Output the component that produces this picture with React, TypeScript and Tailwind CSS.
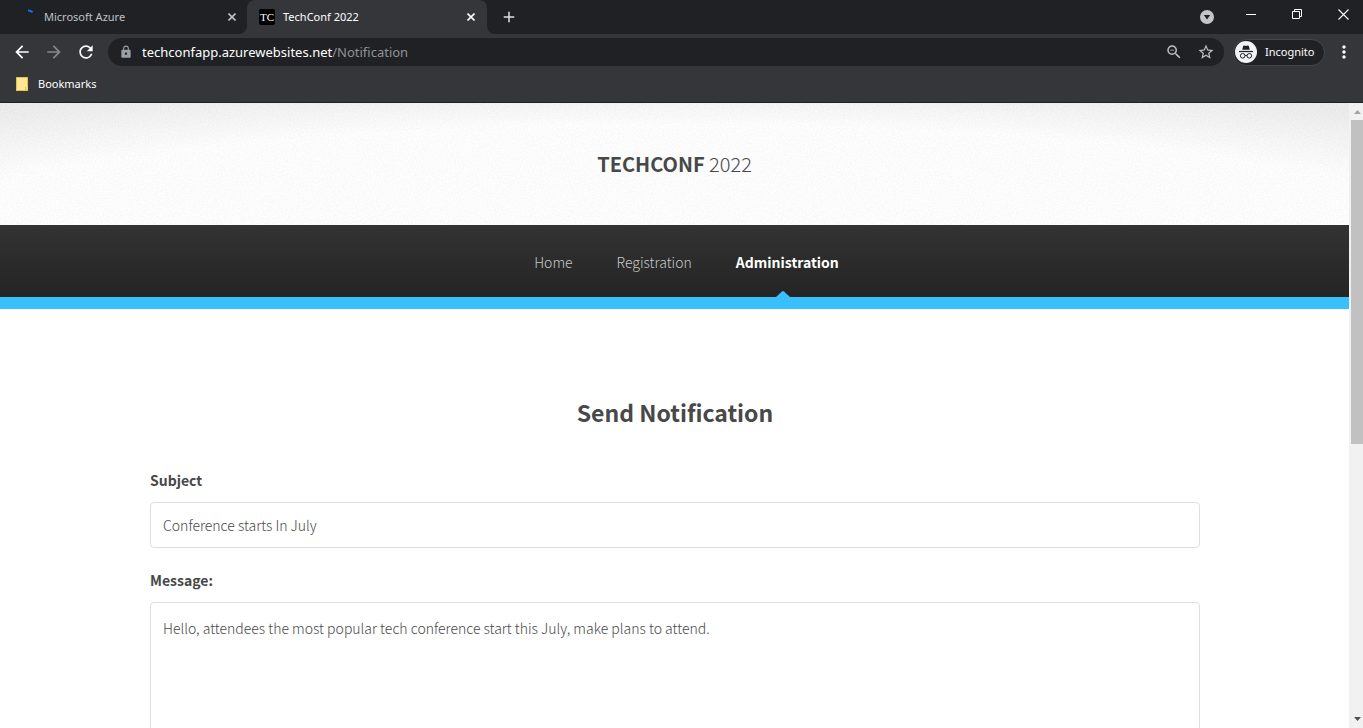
import type { ReactNode } from "react";
import {
  MdAdd,
  MdArrowBack,
  MdArrowForward,
  MdLock,
  MdMoreVert,
  MdRefresh,
  MdStarBorder,
  MdZoomOut,
} from "react-icons/md";

function IconButton({ label, className, children }: { label: string; className: string; children: ReactNode }) {
  return (
    <button type="button" aria-label={label} className={`flex shrink-0 items-center justify-center ${className}`}>
      {children}
    </button>
  );
}

function CloseTabButton() {
  return (
    <IconButton label="Close tab" className="size-4">
      <svg className="size-2" viewBox="0 0 8 8" stroke="currentColor" strokeWidth="1.6" aria-hidden="true">
        <path d="M0.5 0.5 L7.5 7.5 M7.5 0.5 L0.5 7.5" />
      </svg>
    </IconButton>
  );
}

function TabStrip() {
  return (
    <div className="flex h-[34px] shrink-0 bg-[#202124] text-[11px] leading-4">
      <div className="flex w-[247px] items-center pr-[7px] pl-5 text-[#bdc1c6]">
        <svg className="size-4 shrink-0" viewBox="0 0 16 16" fill="none" aria-hidden="true">
          <path d="M8 1.5 A7 7 0 0 1 12.6 3.2" stroke="#1a73e8" strokeWidth="2" />
        </svg>
        <span className="grow pl-2">Microsoft Azure</span>
        <CloseTabButton />
      </div>
      <div className="relative flex w-[240px] items-center rounded-t-lg bg-[#35363a] pr-2 pl-3 text-white">
        <svg className="absolute bottom-0 -left-2 size-2" viewBox="0 0 8 8" aria-hidden="true">
          <path d="M8 0 A8 8 0 0 1 0 8 H8 Z" fill="#35363a" />
        </svg>
        <svg className="absolute -right-2 bottom-0 size-2" viewBox="0 0 8 8" aria-hidden="true">
          <path d="M0 0 A8 8 0 0 0 8 8 H0 Z" fill="#35363a" />
        </svg>
        <span className="flex size-4 shrink-0 items-center justify-center rounded-xs bg-black font-['Liberation_Serif',serif] text-white">
          TC
        </span>
        <span className="grow pl-2">TechConf 2022</span>
        <CloseTabButton />
      </div>
      <IconButton label="New tab" className="ml-2 w-7 text-[#dee1e6]">
        <MdAdd className="size-[18px]" />
      </IconButton>
      <div className="ml-auto flex">
        <IconButton label="Search tabs" className="w-7">
          <svg className="size-[14px]" viewBox="0 0 14 14" aria-hidden="true">
            <circle cx="7" cy="7" r="7" fill="#c3c5ca" />
            <path d="M3.8 5 H10.2 L7 9.4 Z" fill="#202124" />
          </svg>
        </IconButton>
        <IconButton label="Minimize" className="ml-[7px] h-7 w-[46px]">
          <svg className="size-[10px]" viewBox="0 0 10 10" aria-hidden="true">
            <path d="M0 5.5 H10" stroke="#fff" />
          </svg>
        </IconButton>
        <IconButton label="Restore" className="h-7 w-[46px]">
          <svg className="size-[10px]" viewBox="0 0 10 10" fill="none" stroke="#fff" aria-hidden="true">
            <path d="M0.5 2.5 H7.5 V9.5 H0.5 Z M2.5 2.5 V0.5 H9.5 V7.5 H7.5" />
          </svg>
        </IconButton>
        <IconButton label="Close window" className="h-7 w-[43px] pl-[3px]">
          <svg className="size-[11px]" viewBox="0 0 11 11" stroke="#fff" strokeWidth="1.1" aria-hidden="true">
            <path d="M0.5 0.5 L10.5 10.5 M10.5 0.5 L0.5 10.5" />
          </svg>
        </IconButton>
      </div>
    </div>
  );
}

function IncognitoIcon() {
  return (
    <svg className="size-[22px] shrink-0" viewBox="0 0 22 22" fill="none" aria-hidden="true">
      <circle cx="11" cy="11" r="11" fill="#f1f3f4" />
      <path d="M7.2 8.8 L8.2 5.1 Q8.5 4.2 9.4 4.5 L11 5 L12.6 4.5 Q13.5 4.2 13.8 5.1 L14.8 8.8 Z" fill="#202124" />
      <path d="M4 10.5 H18" stroke="#202124" strokeWidth="1.2" />
      <circle cx="7.7" cy="14.8" r="2.3" stroke="#202124" />
      <circle cx="14.3" cy="14.8" r="2.3" stroke="#202124" />
      <path d="M10 14.6 Q11 13.9 12 14.6" stroke="#202124" />
    </svg>
  );
}

function Toolbar() {
  return (
    <div className="flex h-9 shrink-0 items-center bg-[#35363a] pl-[6px] text-white">
      <IconButton label="Back" className="size-8">
        <MdArrowBack className="size-5" />
      </IconButton>
      <IconButton label="Forward" className="size-8 text-[#87888b]">
        <MdArrowForward className="size-5" />
      </IconButton>
      <IconButton label="Reload" className="size-8">
        <MdRefresh className="size-5" />
      </IconButton>
      <div className="ml-[6px] flex h-7 grow items-center rounded-full bg-[#202124] pr-[9px] pl-[11px]">
        <MdLock className="size-[14px] shrink-0 text-[#9aa0a6]" />
        <a href="#notification" className="grow pt-px pl-[9px] text-[13px] text-white">
          techconfapp.azurewebsites.net<span className="text-[#8f9195]">/Notification</span>
        </a>
        <IconButton label="Zoom" className="size-8 text-[#bdc1c6]">
          <MdZoomOut className="size-[18px]" />
        </IconButton>
        <IconButton label="Bookmark this page" className="ml-[7px] w-[18px] text-[#bdc1c6]">
          <MdStarBorder className="size-[18px]" />
        </IconButton>
      </div>
      <button
        type="button"
        className="ml-[9px] flex h-[27px] w-[92px] items-center rounded-full border border-[#45464a] bg-[#202124] pl-[1px] text-[11px]"
      >
        <IncognitoIcon />
        <span className="pl-2">Incognito</span>
      </button>
      <IconButton label="Menu" className="mr-[9px] ml-[9px] w-5">
        <MdMoreVert className="size-5" />
      </IconButton>
    </div>
  );
}

function BookmarksBar() {
  return (
    <div className="flex h-[33px] shrink-0 items-center border-b border-[#202124] bg-[#35363a] pb-1 pl-4 text-[11px] text-white">
      <svg className="h-[14px] w-3" viewBox="0 0 12 14" aria-hidden="true">
        <rect width="12" height="14" rx="0.5" fill="#e9c04f" />
        <path d="M1 1 H11 V10 H9 V13 H1 Z" fill="#ffe694" />
        <path d="M10 10 H11.5 V13 H10 Z" fill="#ffe07c" />
      </svg>
      <a href="#bookmarks" className="pl-[10px]">
        Bookmarks
      </a>
    </div>
  );
}

function PaperGrain() {
  return (
    <svg className="absolute inset-0 size-full opacity-[0.03]" aria-hidden="true">
      <filter id="grain">
        <feTurbulence type="fractalNoise" baseFrequency="0.6" numOctaves="2" />
        <feColorMatrix values="0 0 0 0 0  0 0 0 0 0  0 0 0 0 0  1.6 0 0 0 -0.4" />
      </filter>
      <rect width="100%" height="100%" filter="url(#grain)" />
    </svg>
  );
}

function SiteHeader() {
  return (
    <header>
      <div className="relative flex h-[122px] items-center justify-center bg-white bg-[radial-gradient(ellipse_80%_120%_at_50%_100%,#ffffff_68%,#ededed_100%)]">
        <PaperGrain />
        <h1 className="relative text-[20px] font-light text-[#484848]">
          <a href="#home">
            <strong className="font-bold">TECHCONF</strong> 2022
          </a>
        </h1>
      </div>
      <nav className="flex h-[84px] items-center justify-center gap-11 border-b-12 border-[#37c0fb] bg-linear-to-b from-[#333333] to-[#242424] pl-6 text-[14px] font-light text-[#c8c8c8]">
        <a href="#home" className="pt-[3px]">
          Home
        </a>
        <a href="#registration" className="pt-[3px]">
          Registration
        </a>
        <a
          href="#administration"
          aria-current="page"
          className="relative flex h-full items-center pt-[3px] font-bold text-white"
        >
          Administration
          <svg className="absolute bottom-0 left-10 h-[6px] w-[14px]" viewBox="0 0 14 6" aria-hidden="true">
            <path d="M0 6 L6 0.5 Q7 -0.3 8 0.5 L14 6 Z" fill="#37c0fb" />
          </svg>
        </a>
      </nav>
    </header>
  );
}

function NotificationForm() {
  return (
    <main className="pt-[83px] pr-[149px] pl-[150px] text-[#484848]">
      <h2 className="text-center text-[23px] leading-10 font-bold">Send Notification</h2>
      <form className="flex flex-col pt-9 text-[14px] leading-6">
        <label htmlFor="subject" className="font-bold">
          Subject
        </label>
        <input
          id="subject"
          type="text"
          defaultValue="Conference starts In July"
          className="mt-[10px] h-[46px] rounded border border-[#dedede] px-3 font-light"
        />
        <label htmlFor="message" className="mt-5 font-bold">
          Message:
        </label>
        <textarea
          id="message"
          defaultValue="Hello, attendees the most popular tech conference start this July, make plans to attend."
          className="mt-[10px] h-60 resize-none rounded border border-[#dedede] px-3 py-[13px] font-light"
        />
      </form>
    </main>
  );
}

function Scrollbar() {
  return (
    <div className="flex w-[14px] shrink-0 flex-col bg-[#f1f1f1] pl-[2px]" aria-hidden="true">
      <svg className="h-[17px] w-3" viewBox="0 0 12 17">
        <path d="M3 11 L6.5 7 L10 11 Z" fill="#a3a3a3" />
      </svg>
      <div className="h-[324px] bg-[#c1c1c1]" />
      <svg className="mt-auto h-[17px] w-3" viewBox="0 0 12 17">
        <path d="M3 6 H10 L6.5 10 Z" fill="#505050" />
      </svg>
    </div>
  );
}

export default function App() {
  return (
    <div className="flex h-screen flex-col overflow-hidden bg-white font-['Noto_Sans',sans-serif]">
      <TabStrip />
      <Toolbar />
      <BookmarksBar />
      <div className="flex min-h-0 grow">
        <div className="min-w-0 grow overflow-hidden font-['Noto_Sans_CJK_SC',sans-serif]">
          <SiteHeader />
          <NotificationForm />
        </div>
        <Scrollbar />
      </div>
    </div>
  );
}
